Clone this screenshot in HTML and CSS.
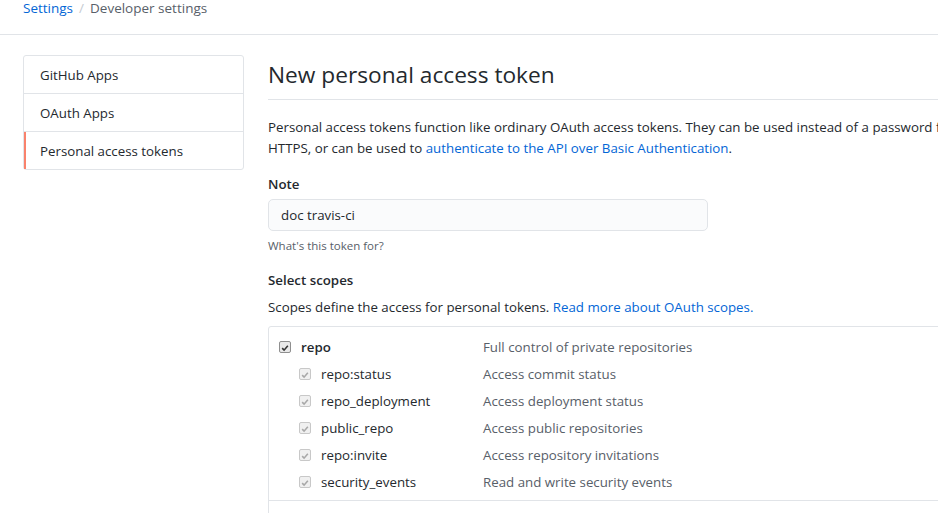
FILE: index.html
```html
<!DOCTYPE html>
<html>
<head>
<meta charset="utf-8">
<link rel="stylesheet" href="styles.css">
</head>
<body>
<div class="topbar">
  <div class="crumbs"><a class="link" href="#">Settings</a><span class="sep">/</span><span class="cur">Developer settings</span></div>
</div>
<div class="page">
  <nav class="menu">
    <a class="item" href="#">GitHub Apps</a>
    <a class="item" href="#">OAuth Apps</a>
    <a class="item selected" href="#">Personal access tokens</a>
  </nav>
  <main class="main">
    <h1 class="title">New personal access token</h1>
    <p class="intro">Personal access tokens function like ordinary OAuth access tokens. They can be used instead of a password for Git over HTTPS, or can be used to <a class="link" href="#">authenticate to the API over Basic Authentication</a>.</p>
    <div class="field">
      <label class="label">Note</label>
      <div class="input">doc travis-ci</div>
      <p class="hint">What's this token for?</p>
    </div>
    <div class="field scopes-field">
      <label class="label">Select scopes</label>
      <p class="desc">Scopes define the access for personal tokens. <a class="link" href="#">Read more about OAuth scopes.</a></p>
    </div>
    <div class="scopes">
      <div class="group">
        <div class="row parent">
          <span class="name"><span class="cb on"><svg viewBox="0 0 12 12" width="12" height="12"><path d="M2.6 6.2 L4.9 8.6 L9.4 3.2" fill="none" stroke="#333" stroke-width="1.9"/></svg></span><b>repo</b></span>
          <span class="what">Full control of private repositories</span>
        </div>
        <div class="row child">
          <span class="name"><span class="cb dis"><svg viewBox="0 0 12 12" width="12" height="12"><path d="M2.6 6.2 L4.9 8.6 L9.4 3.2" fill="none" stroke="#a8a8a8" stroke-width="1.9"/></svg></span>repo:status</span>
          <span class="what">Access commit status</span>
        </div>
        <div class="row child">
          <span class="name"><span class="cb dis"><svg viewBox="0 0 12 12" width="12" height="12"><path d="M2.6 6.2 L4.9 8.6 L9.4 3.2" fill="none" stroke="#a8a8a8" stroke-width="1.9"/></svg></span>repo_deployment</span>
          <span class="what">Access deployment status</span>
        </div>
        <div class="row child">
          <span class="name"><span class="cb dis"><svg viewBox="0 0 12 12" width="12" height="12"><path d="M2.6 6.2 L4.9 8.6 L9.4 3.2" fill="none" stroke="#a8a8a8" stroke-width="1.9"/></svg></span>public_repo</span>
          <span class="what">Access public repositories</span>
        </div>
        <div class="row child">
          <span class="name"><span class="cb dis"><svg viewBox="0 0 12 12" width="12" height="12"><path d="M2.6 6.2 L4.9 8.6 L9.4 3.2" fill="none" stroke="#a8a8a8" stroke-width="1.9"/></svg></span>repo:invite</span>
          <span class="what">Access repository invitations</span>
        </div>
        <div class="row child">
          <span class="name"><span class="cb dis"><svg viewBox="0 0 12 12" width="12" height="12"><path d="M2.6 6.2 L4.9 8.6 L9.4 3.2" fill="none" stroke="#a8a8a8" stroke-width="1.9"/></svg></span>security_events</span>
          <span class="what">Read and write security events</span>
        </div>
      </div>
      <div class="group">
        <div class="row parent">
          <span class="name"><span class="cb"></span><b>admin:org</b></span>
          <span class="what">Full control of orgs and teams, read and write org projects</span>
        </div>
      </div>
    </div>
  </main>
</div>
</body>
</html>
```

FILE: styles.css
```css
* { box-sizing: border-box; }
html, body { margin: 0; padding: 0; overflow: hidden; }
body {
  font-family: "Open Sans", "Noto Sans", sans-serif;
  font-size: 13.3px;
  color: #24292e;
  background: #fff;
  width: 938px;
  height: 513px;
}
.link { color: #0366d6; text-decoration: none; }
.topbar {
  height: 35px;
  border-bottom: 1px solid #e1e4e8;
  padding-left: 23px;
}
.crumbs { font-size: 13.5px; line-height: 16px; }
.sep { color: #c6cbd1; padding: 0 6px; }
.cur { color: #586069; }
.page {
  display: flex;
  padding: 20px 0 0 23px;
  width: 1100px;
  gap: 24px;
}
.menu {
  width: 221px;
  flex: none;
  align-self: flex-start;
  border: 1px solid #e1e4e8;
  border-radius: 3px;
  display: flex;
  flex-direction: column;
}
.item {
  display: block;
  height: 38px;
  line-height: 38px;
  padding-left: 16px;
  color: #24292e;
  text-decoration: none;
  border-bottom: 1px solid #e1e4e8;
}
.item:last-child { border-bottom: 0; }
.selected {
  border-left: 2px solid #f9826c;
  padding-left: 14px;
  height: 37px;
  line-height: 38px;
}
.main { width: 780px; flex: none; }
.title {
  font-size: 22.7px;
  font-weight: 400;
  margin: 0;
  padding-top: 3px;
  padding-bottom: 8px;
  line-height: 33px;
  border-bottom: 1px solid #e1e4e8;
}
.intro { margin: 17px 0 0; line-height: 21px; }
.field { margin-top: 15px; }
.label { display: block; font-weight: 600; line-height: 20px; }
.input {
  margin-top: 5px;
  width: 440px;
  height: 32px;
  line-height: 30px;
  padding: 0 12px;
  background: #fafbfc;
  border: 1px solid #e1e4e8;
  border-radius: 5px;
}
.hint { margin: 6px 0 0; font-size: 11.5px; color: #586069; line-height: 18px; }
.scopes-field { margin-top: 15px; }
.desc { margin: 7px 0 0; line-height: 21px; }
.scopes {
  margin-top: 8px;
  border: 1px solid #e1e4e8;
  border-radius: 3px;
}
.group { padding: 6px 0 5px 0; border-bottom: 1px solid #e1e4e8; }
.row { display: flex; height: 27px; align-items: center; }
.name { width: 214px; display: flex; align-items: center; padding-left: 10px; }
.child .name { padding-left: 30px; }
.name b { font-weight: 600; }
.cb {
  width: 12px;
  height: 12px;
  border: 1px solid #8f8f8f;
  border-radius: 2px;
  background: #e9e9e9;
  margin-right: 10px;
  display: inline-flex;
}
.cb.dis { border-color: #c8c8c8; background: #f0f0f0; }
.what { color: #586069; }
```
